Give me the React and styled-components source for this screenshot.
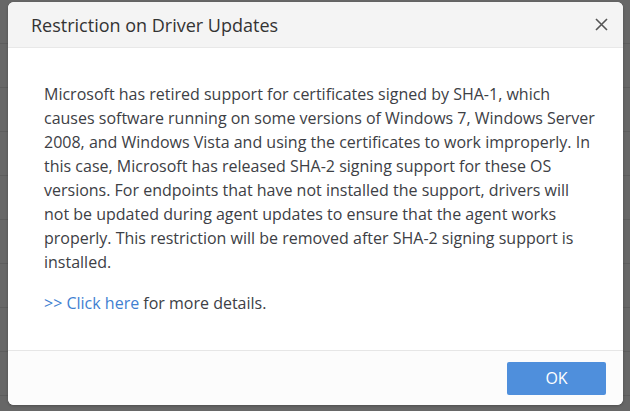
import React from "react";
import styled, { createGlobalStyle } from "styled-components";

const GlobalStyle = createGlobalStyle`
  html, body {
    margin: 0;
    padding: 0;
    width: 630px;
    height: 411px;
    overflow: hidden;
    font-family: "Open Sans", "Noto Sans", sans-serif;
  }
`;

// dimmed page behind the dialog
const Backdrop = styled.div`
  width: 630px;
  height: 411px;
  box-sizing: border-box;
  padding: 2px 7px 6px 8px;
  background-color: #676767;
  background-image: repeating-linear-gradient(
    to bottom,
    transparent 0px,
    transparent 43px,
    #5d5d5d 43px,
    #5d5d5d 44px
  );
`;

const Dialog = styled.div`
  height: 100%;
  display: flex;
  flex-direction: column;
  background: #fff;
  border-radius: 6px;
  overflow: hidden;
  box-shadow: 0 1px 3px rgba(0, 0, 0, 0.25);
`;

const Header = styled.div`
  height: 45px;
  flex: none;
  display: flex;
  align-items: center;
  justify-content: space-between;
  padding: 0 14px 0 23px;
  background: #f4f4f4;
  border-bottom: 1px solid #e8e8e8;
`;

const Title = styled.h3`
  margin: 0;
  font-size: 18px;
  font-weight: 400;
  color: #333;
`;

const CloseButton = styled.button`
  border: none;
  background: none;
  padding: 0;
  width: 16px;
  height: 16px;
  display: flex;
  align-items: center;
  justify-content: center;
  cursor: pointer;
`;

const Body = styled.div`
  flex: 1;
  padding: 34px 10px 0 36px;
  color: #3d4045;
  font-size: 16px;
  line-height: 24px;
`;

const Paragraph = styled.p`
  margin: 0 0 17px 0;
  white-space: nowrap;
`;

const Link = styled.a`
  color: #3f7fd1;
  text-decoration: none;
`;

const Footer = styled.div`
  height: 54px;
  flex: none;
  display: flex;
  align-items: center;
  justify-content: flex-end;
  padding: 0 17px;
  background: #fcfcfc;
  border-top: 1px solid #e6e6e6;
`;

const PrimaryButton = styled.button`
  width: 99px;
  height: 33px;
  border: none;
  border-radius: 2px;
  background: #4f8fdc;
  color: #fff;
  font-family: "Open Sans", "Noto Sans", sans-serif;
  font-size: 16px;
  cursor: pointer;
`;

const lines = [
  "Microsoft has retired support for certificates signed by SHA-1, which",
  "causes software running on some versions of Windows 7, Windows Server",
  "2008, and Windows Vista and using the certificates to work improperly. In",
  "this case, Microsoft has released SHA-2 signing support for these OS",
  "versions. For endpoints that have not installed the support, drivers will",
  "not be updated during agent updates to ensure that the agent works",
  "properly. This restriction will be removed after SHA-2 signing support is",
  "installed.",
];

const App = () => {
  return (
    <>
      <GlobalStyle />
      <Backdrop>
        <Dialog>
          <Header>
            <Title>Restriction on Driver Updates</Title>
            <CloseButton aria-label="Close">
              <svg width="13" height="13" viewBox="0 0 13 13">
                <path
                  d="M1 1 L12 12 M12 1 L1 12"
                  stroke="#555"
                  strokeWidth="1.6"
                  fill="none"
                />
              </svg>
            </CloseButton>
          </Header>
          <Body>
            <Paragraph>
              {lines.map((line, i) => (
                <React.Fragment key={i}>
                  {line}
                  {i < lines.length - 1 && <br />}
                </React.Fragment>
              ))}
            </Paragraph>
            <Paragraph>
              <Link href="#">&gt;&gt; Click here</Link> for more details.
            </Paragraph>
          </Body>
          <Footer>
            <PrimaryButton>OK</PrimaryButton>
          </Footer>
        </Dialog>
      </Backdrop>
    </>
  );
};

export default App;
